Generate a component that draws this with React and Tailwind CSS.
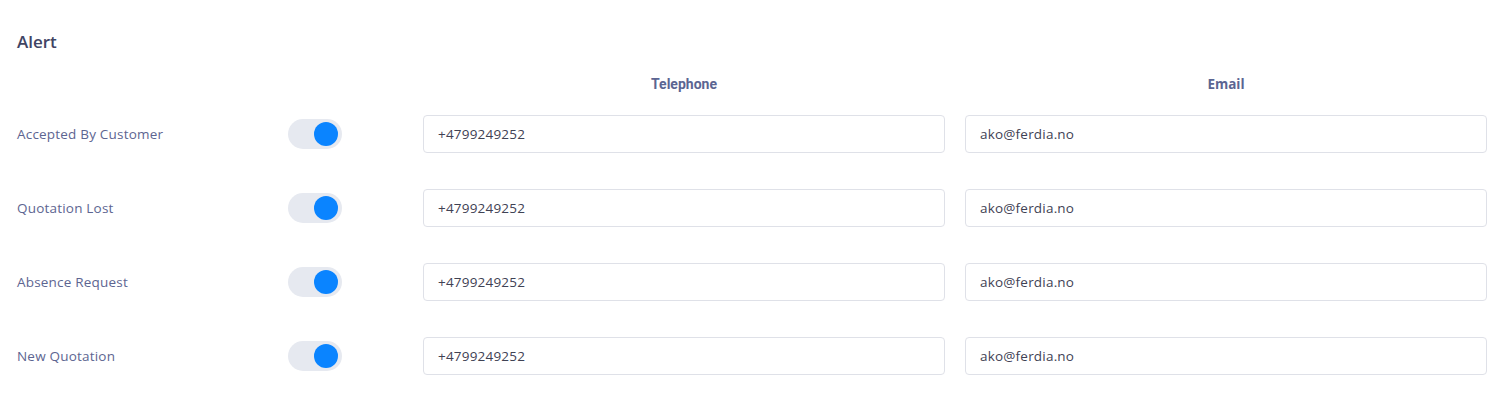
import React from "react";

const rows = [
  { label: "Accepted By Customer", phone: "+4799249252", email: "ako@ferdia.no" },
  { label: "Quotation Lost", phone: "+4799249252", email: "ako@ferdia.no" },
  { label: "Absence Request", phone: "+4799249252", email: "ako@ferdia.no" },
  { label: "New Quotation", phone: "+4799249252", email: "ako@ferdia.no" },
];

function Toggle() {
  return (
    <div className="w-[54px] h-[30px] rounded-full bg-[#e6e9f0] flex items-center justify-end pr-[4px]">
      <div className="w-[24px] h-[24px] rounded-full bg-[#0a84ff]" />
    </div>
  );
}

export default function App() {
  return (
    <div className="w-[1504px] h-[400px] bg-white px-[17px] pt-[31px] font-['Open_Sans',sans-serif]">
      <h2 className="text-[17px] leading-[22px] font-semibold text-[#404463]">Alert</h2>

      <div className="grid grid-cols-[251px_115px_522px_522px] gap-x-[20px] mt-[20px]">
        <div />
        <div />
        <div className="text-center text-[14px] leading-[22px] font-bold text-[#5b6592] font-['Roboto',sans-serif]">
          Telephone
        </div>
        <div className="text-center text-[13.5px] leading-[22px] font-bold text-[#5b6592]">Email</div>
      </div>

      <div className="flex flex-col gap-[36px] mt-[20px]">
        {rows.map((r) => (
          <div key={r.label} className="grid grid-cols-[251px_115px_522px_522px] gap-x-[20px] items-center">
            <div className="text-[13.5px] leading-[20px] -mt-[1px] tracking-[0.2px] text-[#5d6591]">{r.label}</div>
            <div>
              <Toggle />
            </div>
            <div className="h-[38px] border border-[#dfe1e8] rounded-[4px] flex items-center px-[14px] text-[13.5px] tracking-[0.2px] text-[#3f4254]">
              {r.phone}
            </div>
            <div className="h-[38px] border border-[#dfe1e8] rounded-[4px] flex items-center px-[14px] text-[13.5px] tracking-[0.2px] text-[#3f4254]">
              {r.email}
            </div>
          </div>
        ))}
      </div>
    </div>
  );
}
